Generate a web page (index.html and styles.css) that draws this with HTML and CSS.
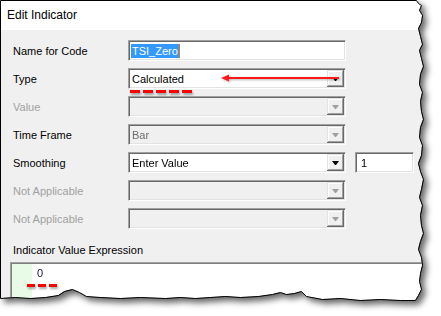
FILE: index.html
```html
<!DOCTYPE html>
<html lang="en">
<head>
  <meta charset="UTF-8">
  <title>Edit Indicator</title>
  <link rel="stylesheet" href="styles.css">
</head>
<body>
  <div class="shot">
    <div class="dialog">
      <div class="titlebar">Edit Indicator</div>
      <div class="body">
        <div class="form">
          <div class="row">
            <span class="lbl">Name for Code</span>
            <div class="box edit"><span class="sel">TSI_Zero</span><span class="caret"></span></div>
          </div>
          <div class="row">
            <span class="lbl">Type</span>
            <div class="box combo">
              <span class="val">Calculated</span>
              <span class="btn"><i class="tri"></i></span>
              <span class="dashes dashes-type"></span>
              <svg class="arrow" width="124" height="12" viewBox="0 0 124 12">
                <line x1="6" y1="6" x2="118" y2="6" stroke="#ff1a1a" stroke-width="2"/>
                <polygon points="0,6 8,2.5 8,9.5" fill="#ff1a1a"/>
              </svg>
            </div>
          </div>
          <div class="row">
            <span class="lbl off">Value</span>
            <div class="box combo disabled"><span class="val"></span><span class="btn"><i class="tri"></i></span></div>
          </div>
          <div class="row">
            <span class="lbl">Time Frame</span>
            <div class="box combo disabled"><span class="val">Bar</span><span class="btn"><i class="tri"></i></span></div>
          </div>
          <div class="row">
            <span class="lbl">Smoothing</span>
            <div class="box combo"><span class="val">Enter Value</span><span class="btn"><i class="tri"></i></span></div>
            <div class="box edit small"><span class="val">1</span></div>
          </div>
          <div class="row">
            <span class="lbl off">Not Applicable</span>
            <div class="box combo disabled"><span class="val"></span><span class="btn"><i class="tri"></i></span></div>
          </div>
          <div class="row">
            <span class="lbl off">Not Applicable</span>
            <div class="box combo disabled"><span class="val"></span><span class="btn"><i class="tri"></i></span></div>
          </div>
        </div>

        <div class="expr-label">Indicator Value Expression</div>
        <div class="expr">
          <div class="gutter"></div>
          <div class="code">
            <span class="zero">0<span class="dashes dashes-zero"></span></span>
          </div>
        </div>
      </div>
    </div>

    <!-- torn paper outline -->
    <svg class="edge" width="441" height="316" viewBox="0 0 441 316">
      <polygon transform="translate(0.5 0.5)" fill="none" stroke="#000" stroke-width="1"
        points="0,0 416,0 418,3 421,5 419,10 422,15 421,22 418,28 420,36 422,44 419,50 421,58 423,66 420,74 419,84 422,92 420,101 421,111 423,119 420,127 419,137 422,145 421,155 418,163 420,171 423,179 421,189 419,197 422,205 420,215 421,225 423,233 420,241 418,249 421,257 422,265 420,273 419,281 421,289 418,295 415,300 400,300 380,299 360,300 340,298 322,299 306,296 301,291 294,293 286,294 280,292 272,294 258,296 240,297 225,296 210,297 195,298 180,297 165,298 140,297 120,298 100,297 86,296 79,292 72,289 64,291 58,295 45,297 30,298 15,297 0,298"/>
    </svg>
  </div>
</body>
</html>
```

FILE: styles.css
```css
body {
  margin: 0;
  background: #fff;
  font-family: 'Liberation Sans', Arial, sans-serif;
  font-size: 11px;
  color: #000;
}
.shot {
  position: relative;
  width: 441px;
  height: 316px;
  filter: drop-shadow(4px 4px 3px rgba(0, 0, 0, 0.6));
}
.dialog {
  width: 426px;
  height: 304px;
  display: flex;
  flex-direction: column;
  background: #f0f0f0;
  clip-path: polygon(0px 0px, 416px 0px, 418px 3px, 421px 5px, 419px 10px, 422px 15px, 421px 22px, 418px 28px, 420px 36px, 422px 44px, 419px 50px, 421px 58px, 423px 66px, 420px 74px, 419px 84px, 422px 92px, 420px 101px, 421px 111px, 423px 119px, 420px 127px, 419px 137px, 422px 145px, 421px 155px, 418px 163px, 420px 171px, 423px 179px, 421px 189px, 419px 197px, 422px 205px, 420px 215px, 421px 225px, 423px 233px, 420px 241px, 418px 249px, 421px 257px, 422px 265px, 420px 273px, 419px 281px, 421px 289px, 418px 295px, 415px 300px, 400px 300px, 380px 299px, 360px 300px, 340px 298px, 322px 299px, 306px 296px, 301px 291px, 294px 293px, 286px 294px, 280px 292px, 272px 294px, 258px 296px, 240px 297px, 225px 296px, 210px 297px, 195px 298px, 180px 297px, 165px 298px, 140px 297px, 120px 298px, 100px 297px, 86px 296px, 79px 292px, 72px 289px, 64px 291px, 58px 295px, 45px 297px, 30px 298px, 15px 297px, 0px 298px);
}
.edge {
  position: absolute;
  left: 0;
  top: 0;
}
.titlebar {
  height: 30px;
  line-height: 31px;
  padding-left: 7px;
  background: #fff;
  font-size: 12px;
}
.body {
  flex: 1;
  display: flex;
  flex-direction: column;
}
.form {
  padding: 10px 0 0 13px;
}
.row {
  display: flex;
  align-items: center;
  height: 21px;
}
.row + .row {
  margin-top: 7px;
}
.lbl {
  width: 115px;
}
.lbl.off {
  color: #a0a0a0;
}
.box {
  position: relative;
  box-sizing: border-box;
  width: 218px;
  height: 21px;
  display: flex;
  align-items: center;
  background: #fff;
  border: 1px solid;
  border-color: #a0a0a0 #fff #fff #a0a0a0;
  box-shadow: inset 1px 1px #696969, inset -1px -1px #e3e3e3;
}
.box.small {
  width: 59px;
  margin-left: 9px;
}
.box .val {
  flex: 1;
  padding-left: 3px;
  white-space: nowrap;
}
.box.disabled {
  background: #f0f0f0;
}
.box.disabled .val {
  color: #6d6d6d;
}
.edit {
  padding-left: 2px;
}
.sel {
  background: #3399ff;
  color: #fff;
  padding: 1px 1px 1px 1px;
}
.caret {
  width: 1px;
  height: 14px;
  background: #e07a10;
}
.btn {
  box-sizing: border-box;
  width: 17px;
  height: 17px;
  margin: 1px 1px 1px 0;
  display: flex;
  align-items: center;
  justify-content: center;
  background: #f0f0f0;
  box-shadow: inset -1px -1px #696969, inset 1px 1px #e3e3e3, inset -2px -2px #a0a0a0, inset 2px 2px #fff;
}
.tri {
  width: 1px;
  height: 0;
  border-left: 3px solid transparent;
  border-right: 3px solid transparent;
  border-top: 4px solid #000;
  margin-top: 1px;
}
.disabled .tri {
  border-top-color: #a0a0a0;
}
.dashes {
  position: absolute;
  height: 3px;
  background: repeating-linear-gradient(90deg, #ff0000 0 10px, transparent 10px 13px);
  filter: drop-shadow(1px 2px 1px rgba(0, 0, 0, 0.35));
}
.dashes-type {
  left: 1px;
  top: 21px;
  width: 63px;
}
.arrow {
  position: absolute;
  left: 92px;
  top: 3px;
  filter: drop-shadow(1px 1px 1px rgba(0, 0, 0, 0.3));
}
.expr-label {
  margin-top: 14px;
  padding-left: 13px;
  line-height: 14px;
}
.expr {
  flex: 1;
  display: flex;
  margin: 5px 0 0 10px;
  background: #fff;
  border-top: 1px solid #a0a0a0;
  border-left: 1px solid #a0a0a0;
  box-shadow: inset 1px 1px #808080;
}
.gutter {
  width: 20px;
  margin: 1px 0 0 1px;
  background: #e7fbe7;
}
.code {
  padding: 3px 0 0 5px;
  line-height: 14px;
}
.zero {
  position: relative;
  color: #14143c;
}
.dashes-zero {
  left: -10px;
  top: 17px;
  width: 31px;
  background: repeating-linear-gradient(90deg, #ff0000 0 8px, transparent 8px 11px);
}
```
